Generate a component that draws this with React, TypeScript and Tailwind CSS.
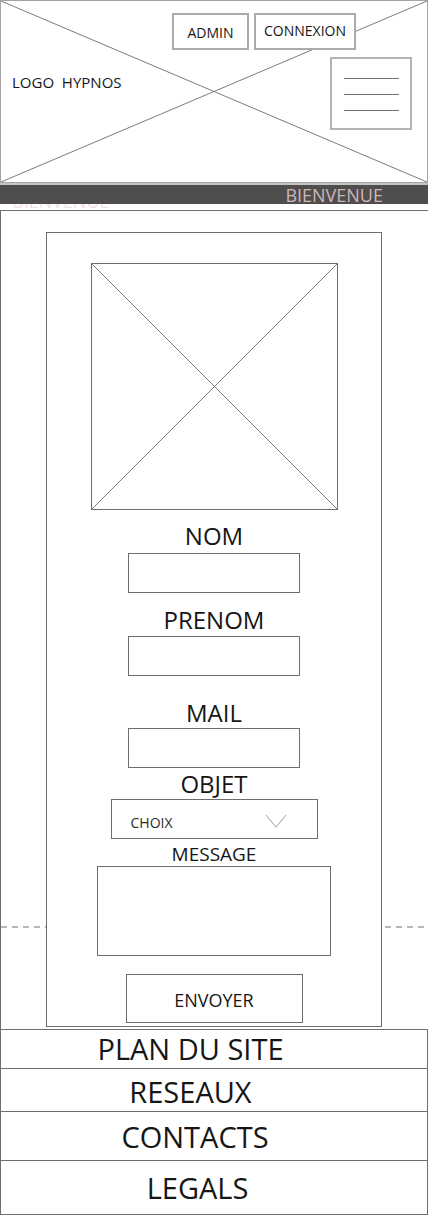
import React from "react";

const font = { fontFamily: '"Open Sans", "Noto Sans", sans-serif' };

export default function App() {
  return (
    <div className="w-[428px] bg-white text-[#161616]" style={font}>
      {/* Header */}
      <div className="relative h-[183px] border border-[#a4a4a4]">
        <svg className="absolute inset-0 h-full w-full" viewBox="0 0 426 181" preserveAspectRatio="none">
          <line x1="0" y1="0" x2="426" y2="181" stroke="#7c7c7c" strokeWidth="1" />
          <line x1="0" y1="181" x2="426" y2="0" stroke="#7c7c7c" strokeWidth="1" />
        </svg>
        <div className="relative flex">
          <div className="w-[171px] whitespace-pre pl-[11px] pt-[74px] text-[15px] leading-[15px]">LOGO  HYPNOS</div>
          <div className="flex flex-col pt-[12px]">
            <div className="flex gap-[5px]">
              <div className="flex h-[37px] w-[77px] items-center justify-center border-2 border-[#ababab] bg-white pt-[2px] text-[14px] leading-[14px]">
                ADMIN
              </div>
              <div className="flex h-[37px] w-[102px] items-center justify-center border-2 border-[#ababab] bg-white pb-[2px] text-[14px] leading-[14px]">
                CONNEXION
              </div>
            </div>
            <div className="ml-[158px] mt-[7px] flex h-[73px] w-[82px] flex-col items-center justify-center gap-[15px] border-2 border-[#b3b3b3] bg-white pt-[2px]">
              <div className="h-px w-[55px] bg-[#6e6e6e]" />
              <div className="h-px w-[55px] bg-[#6e6e6e]" />
              <div className="h-px w-[55px] bg-[#6e6e6e]" />
            </div>
          </div>
        </div>
      </div>

      {/* Bienvenue band */}
      <div className="relative h-[27px]">
        <span className="absolute left-[12px] top-[9px] text-[18px] leading-[18px] text-[#f4e1e4]">BIENVENUE</span>
        <div className="relative h-[2px] bg-[#c6c6c6]" />
        <div className="relative flex h-[19px] justify-end bg-[#4f4e4c] pr-[45px] pt-[1px]">
          <span className="text-[18px] leading-[18px] text-[#cdb5b8]">BIENVENUE</span>
        </div>
      </div>

      {/* Main */}
      <div className="relative border-l border-t border-[#6e6e6e] pb-[2px] pl-[45px] pt-[21px]">
        <svg className="absolute left-0 top-[715px] h-[2px] w-full" viewBox="0 0 428 2" preserveAspectRatio="none">
          <line x1="0" y1="1" x2="428" y2="1" stroke="#6e6e6e" strokeWidth="1" strokeDasharray="6 5" />
        </svg>
        <div className="relative flex h-[795px] w-[336px] flex-col items-center border border-[#6e6e6e] bg-white">
          <div className="relative mt-[30px] h-[247px] w-[247px] border border-[#6e6e6e]">
            <svg className="absolute inset-0 h-full w-full" viewBox="0 0 245 245" preserveAspectRatio="none">
              <line x1="0" y1="0" x2="245" y2="245" stroke="#7a7a7a" strokeWidth="1" />
              <line x1="0" y1="245" x2="245" y2="0" stroke="#7a7a7a" strokeWidth="1" />
            </svg>
          </div>

          <div className="mt-[14px] text-[24px] leading-[24px]">NOM</div>
          <div className="mt-[5px] h-[40px] w-[172px] border border-[#6e6e6e]" />

          <div className="mt-[15px] text-[24px] leading-[24px]">PRENOM</div>
          <div className="mt-[4px] h-[40px] w-[172px] border border-[#6e6e6e]" />

          <div className="mt-[25px] text-[24px] leading-[24px]">MAIL</div>
          <div className="mt-[3px] h-[40px] w-[172px] border border-[#6e6e6e]" />

          <div className="mt-[4px] text-[24px] leading-[24px]">OBJET</div>
          <div className="mt-[3px] flex h-[40px] w-[207px] items-center border border-[#6e6e6e] pl-[19px] pt-[8px]">
            <span className="text-[14px] leading-[14px] text-[#2a2a2a]">CHOIX</span>
            <svg className="ml-auto mr-[30px] -mt-[4px]" width="22" height="14" viewBox="0 0 22 14">
              <polyline points="1,1 11,13 21,1" fill="none" stroke="#9a9a9a" strokeWidth="1" />
            </svg>
          </div>

          <div className="mt-[6px] text-[19px] leading-[19px]">MESSAGE</div>
          <div className="mt-[2px] h-[90px] w-[234px] border border-[#6e6e6e]" />

          <div className="mt-[18px] flex h-[49px] w-[177px] items-center justify-center border border-[#6e6e6e] pt-[3px] text-[18px] leading-[18px]">
            ENVOYER
          </div>
        </div>
      </div>

      {/* Footer */}
      <div className="border-x border-t border-[#6e6e6e] text-[29px] leading-[29px]">
        <div className="h-[39px] border-b border-[#6e6e6e] pr-[47px] pt-[4px] text-center">PLAN DU SITE</div>
        <div className="h-[43px] border-b border-[#6e6e6e] pr-[47px] pt-[8px] text-center">RESEAUX</div>
        <div className="h-[49px] border-b border-[#6e6e6e] pr-[38px] pt-[10px] text-center">CONTACTS</div>
        <div className="h-[54px] border-b border-[#6e6e6e] pr-[33px] pt-[12px] text-center">LEGALS</div>
      </div>
    </div>
  );
}
